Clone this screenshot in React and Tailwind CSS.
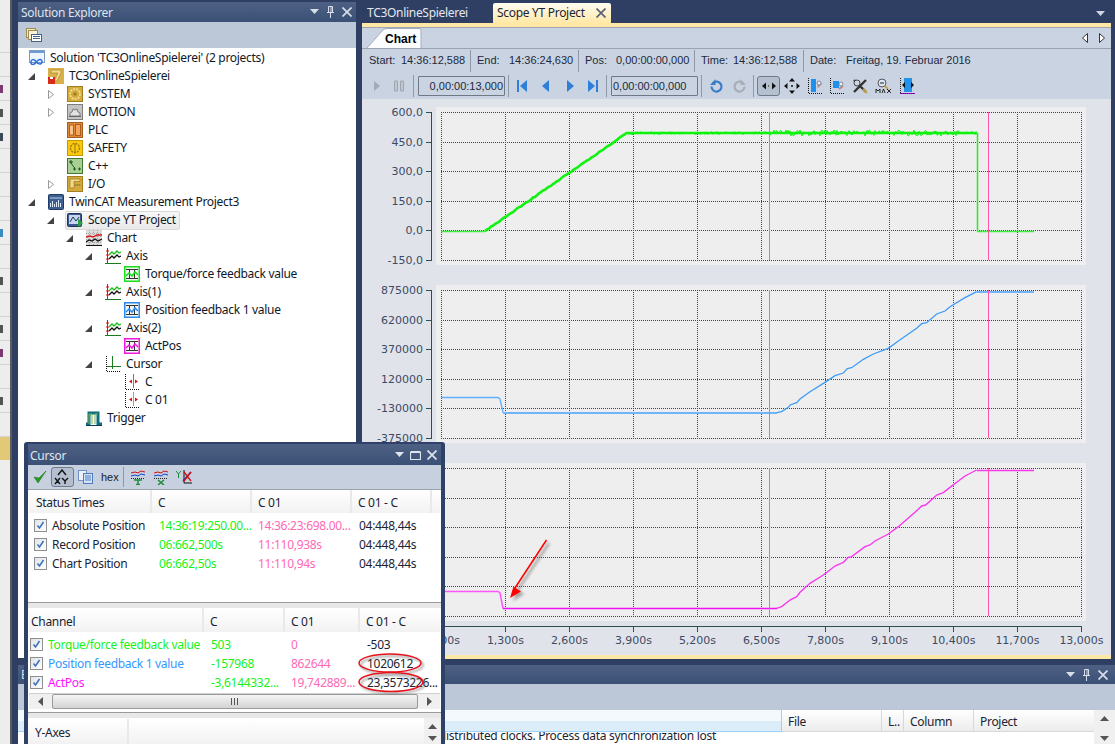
import React from "react";

const UI = "font-['Noto_Sans',sans-serif] tracking-[-0.3px]";
const TAH = "font-['Liberation_Sans',sans-serif] tracking-normal";

function Tri({ className = "" }) {
  return <svg width="9" height="6" viewBox="0 0 9 6" className={className}><path d="M0 0h9L4.500 5z" fill="currentColor" /></svg>;
}
function Pin() {
  return <svg width="9" height="12" viewBox="0 0 9 12"><path d="M2.500 .5h4v6h-4zM1 6.500h7M4.500 7v5M5 1v5" stroke="currentColor" fill="none" /></svg>;
}
function Cross() {
  return <svg width="10" height="10" viewBox="0 0 10 10"><path d="M.5.5l9 9M9.500.5l-9 9" stroke="currentColor" strokeWidth="1.700" /></svg>;
}
function Maxi() {
  return <svg width="11" height="10" viewBox="0 0 11 10"><path d="M.5 2.500h10v7H.5z M.5 1.500h10" stroke="currentColor" fill="none" strokeWidth="1.200" /></svg>;
}

/* --- tree icons --- */
function Box({ fill, stroke, children }) {
  return (
    <svg width="16" height="16" viewBox="0 0 16 16" className="shrink-0">
      <rect x=".5" y=".5" width="15" height="15" fill={fill} stroke={stroke} />
      {children}
    </svg>
  );
}
const IconSolution = () => (
  <svg width="16" height="16" viewBox="0 0 16 16" className="shrink-0">
    <rect x=".5" y=".5" width="15" height="12" fill="#eef4fb" stroke="#7c9cc8" />
    <rect x="1" y="1" width="14" height="2" fill="#6f9ad6" />
    <path d="M2 12c0-3 3-3 4.500-1s3 3.500 5 3 2-4 0-4.500S8 11 6.500 13 1.500 15 2 12z" fill="none" stroke="#2d6fe0" strokeWidth="1.500" />
  </svg>
);
const IconProject = () => (
  <svg width="16" height="16" viewBox="0 0 16 16" className="shrink-0">
    <rect width="16" height="16" fill="#d8b049" />
    <path d="M3 2h10v3l-4 8H6l4-8H3z" fill="#f0d88a" stroke="#a8802a" strokeWidth=".6" />
    <rect y="9" width="7" height="7" fill="#d92a1c" />
    <rect x="2" y="9" width="3" height="2" fill="#fff" />
  </svg>
);
const IconSystem = () => (
  <Box fill="#d5ab3c" stroke="#a27f22">
    <circle cx="8" cy="8" r="5" fill="none" stroke="#f0d88a" strokeWidth="2" strokeDasharray="2 1" />
    <circle cx="8" cy="8" r="1.800" fill="#a27f22" />
  </Box>
);
const IconMotion = () => (
  <Box fill="#c4c4c4" stroke="#7d7d7d">
    <path d="M3 12V9l2-1 1-3 2 1 2-1 1 3 2 1v3z" fill="#e2e2e2" stroke="#666" strokeWidth=".8" />
    <path d="M2 12.500h12" stroke="#666" />
  </Box>
);
const IconPlc = () => (
  <Box fill="#e0883a" stroke="#a85e1c">
    <rect x="2.500" y="3" width="4" height="10" fill="#f5c38c" stroke="#9c5215" strokeWidth=".8" />
    <rect x="8.500" y="2.500" width="5" height="11" fill="#f1a45d" stroke="#9c5215" strokeWidth=".8" />
  </Box>
);
const IconSafety = () => (
  <Box fill="#fbc90d" stroke="#c49a00">
    <circle cx="8" cy="8" r="4.500" fill="none" stroke="#9a7b10" strokeWidth="1.400" strokeDasharray="2 1" />
    <path d="M8 4v8" stroke="#9a7b10" />
  </Box>
);
const IconCpp = () => (
  <Box fill="#a9cf95" stroke="#3f7a2c">
    <path d="M3 3c2 3 3 6 5 7" stroke="#1e5c1e" fill="none" />
    <path d="M6 11h3M7.500 9.500v3M11 11h3M12.500 9.500v3M3 3h2v2H3z" stroke="#1e5c1e" fill="none" />
  </Box>
);
const IconIO = () => (
  <Box fill="#d5a93a" stroke="#a27f22">
    <path d="M3 3h10v2.500H7v3h6v1H7v2.500H3z" fill="#f0d88a" stroke="#8f6d18" strokeWidth=".6" />
  </Box>
);
const IconMeas = () => (
  <svg width="16" height="16" viewBox="0 0 16 16" className="shrink-0">
    <rect x=".5" y=".5" width="15" height="15" rx="1" fill="#3d5f90" stroke="#1f3a66" />
    <path d="M2 4h12" stroke="#bcd2ee" />
    <path d="M2.500 13V9M4.500 13V7M6.500 13v-3M8.500 13V8M10.500 13V6M12.500 13V9" stroke="#dfe9f7" />
  </svg>
);
const IconScope = () => (
  <svg width="16" height="16" viewBox="0 0 16 16" className="shrink-0">
    <rect x=".5" y="1.500" width="14" height="13" rx="1" fill="#3c5a8e" stroke="#1d3560" />
    <rect x="2" y="3" width="11" height="9" fill="#c6d6ec" />
    <path d="M3 10l3-5 3 4 3-4" stroke="#1d3560" fill="none" />
    <path d="M11 6.500l5 4.500-5 4.500z" fill="#2e9e46" />
  </svg>
);
const IconChart = () => (
  <svg width="16" height="16" viewBox="0 0 16 16" className="shrink-0">
    <rect width="16" height="16" fill="#dcdcdc" />
    <path d="M0 3.500h16M0 6.500h16M0 9.500h16M0 12.500h16M3.500 0v16M7.500 0v16M11.500 0v16" stroke="#aaa" strokeDasharray="1 1" />
    <path d="M0 7l4-1 3 1 4-2 5 0" stroke="#e01010" fill="none" strokeWidth="1.300" />
    <path d="M0 12l3-2 3 1 3-2 3 2 4-2" stroke="#111" fill="none" strokeWidth="1.300" />
    <path d="M0 15.500h16" stroke="#111" />
  </svg>
);
const IconAxis = () => (
  <svg width="16" height="16" viewBox="0 0 16 16" className="shrink-0">
    <path d="M2.500 0v15" stroke="#e01010" />
    <path d="M1 3h3M1 7h3M1 11h3" stroke="#e01010" />
    <path d="M0 15.500h16" stroke="#1b7a1b" />
    <path d="M4 7l3-3 2 2 3-3 2 2 2-1" stroke="#18c018" fill="none" strokeWidth="1.300" />
    <path d="M4 11l3-3 2 2 3-3 2 2 2-1" stroke="#111" fill="none" strokeWidth="1.300" />
  </svg>
);
const IconChan = ({ color }) => (
  <svg width="16" height="16" viewBox="0 0 16 16" className="shrink-0">
    <rect x=".75" y=".75" width="14.500" height="14.500" fill="#f4f4f4" stroke={color} strokeWidth="1.500" />
    <path d="M2 3.500h12M2 12.500h12M5.500 3v10M10.500 3v10" stroke="#333" />
    <path d="M2 10l3-3 3 3 3-4 3 3" stroke={color} fill="none" strokeWidth="1.500" />
  </svg>
);
const IconCursorT = () => (
  <svg width="16" height="16" viewBox="0 0 16 16" className="shrink-0">
    <path d="M1.500 0v15.500H16" stroke="#111" fill="none" strokeDasharray="1 1" />
    <path d="M7.500 0v13M2 10.500h14" stroke="#1d7a1d" fill="none" />
  </svg>
);
const IconC = ({ color }) => (
  <svg width="16" height="16" viewBox="0 0 16 16" className="shrink-0">
    <path d="M1.500 0v15.500H16" stroke="#111" fill="none" strokeDasharray="1 1" />
    <path d="M9.500 0v14" stroke={color} fill="none" />
    <path d="M5 7.500l3-2v4zM14 7.500l-3-2v4z" fill="#e01010" />
  </svg>
);
const IconTrigger = () => (
  <svg width="16" height="16" viewBox="0 0 16 16" className="shrink-0">
    <path d="M0 14h3V3h9v11h4" stroke="#0c6f7e" strokeWidth="3" fill="none" />
    <path d="M3 14V4h3v10M9 14V4h3" stroke="#7fb552" strokeWidth="1" fill="none" />
    <path d="M0 15.500h16" stroke="#0a3c5e" />
  </svg>
);

const indent = {
  0: "pl-[11px]",
  1: "pl-[11px]",
  2: "pl-[30px]",
  3: "pl-[49px]",
  4: "pl-[68px]",
  5: "pl-[87px]",
};

const tree = [
  { l: 0, t: "Solution 'TC3OnlineSpielerei' (2 projects)", i: <IconSolution />, a: "none0" },
  { l: 1, t: "TC3OnlineSpielerei", i: <IconProject />, a: "open" },
  { l: 2, t: "SYSTEM", i: <IconSystem />, a: "closed" },
  { l: 2, t: "MOTION", i: <IconMotion />, a: "closed" },
  { l: 2, t: "PLC", i: <IconPlc />, a: "none" },
  { l: 2, t: "SAFETY", i: <IconSafety />, a: "none" },
  { l: 2, t: "C++", i: <IconCpp />, a: "none" },
  { l: 2, t: "I/O", i: <IconIO />, a: "closed" },
  { l: 1, t: "TwinCAT Measurement Project3", i: <IconMeas />, a: "open" },
  { l: 2, t: "Scope YT Project", i: <IconScope />, a: "open", sel: true },
  { l: 3, t: "Chart", i: <IconChart />, a: "open" },
  { l: 4, t: "Axis", i: <IconAxis />, a: "open" },
  { l: 5, t: "Torque/force feedback value", i: <IconChan color="#18e018" />, a: "none" },
  { l: 4, t: "Axis(1)", i: <IconAxis />, a: "open" },
  { l: 5, t: "Position feedback 1 value", i: <IconChan color="#2a8cf0" />, a: "none" },
  { l: 4, t: "Axis(2)", i: <IconAxis />, a: "open" },
  { l: 5, t: "ActPos", i: <IconChan color="#f018e0" />, a: "none" },
  { l: 4, t: "Cursor", i: <IconCursorT />, a: "open" },
  { l: 5, t: "C", i: <IconC color="#18c018" />, a: "none" },
  { l: 5, t: "C 01", i: <IconC color="#f070a8" />, a: "none" },
  { l: 3, t: "Trigger", i: <IconTrigger />, a: "none" },
];

function TreeArrow({ a }) {
  if (a === "none0") return null;
  return (
    <span className="w-[19px] shrink-0 flex items-center">
      {a === "open" && <svg width="7" height="7" viewBox="0 0 7 7" className="-ml-[1px]"><path d="M0 7L7 0v7z" fill="#444" /></svg>}
      {a === "closed" && <svg width="6" height="9" viewBox="0 0 6 9"><path d="M.5.5l5 4-5 4z" fill="#fff" stroke="#999" /></svg>}
    </span>
  );
}

function SolutionExplorer() {
  return (
    <div className="w-[338px] h-[656px] mt-[2px] flex flex-col shrink-0">
      <div className="h-[20px] bg-gradient-to-b from-[#4e6184] to-[#3b5076] flex items-center pl-[3px] text-[#dfe5ef]">
        <span className="text-[12px] flex-1 pt-[1px]">Solution Explorer</span>
        <span className="flex items-center gap-[7px] pr-[4px] text-[#d8dfea]">
          <Tri />
          <Pin />
          <Cross />
        </span>
      </div>
      <div className="h-[26px] bg-[#bcc7d8] flex items-center pl-[8px]">
        <svg width="16" height="16" viewBox="0 0 16 16">
          <rect x=".5" y="1.500" width="9" height="9" fill="#f5e7b8" stroke="#a08c50" />
          <rect x="2.500" y="3.500" width="9" height="9" fill="#fbf3d8" stroke="#a08c50" />
          <rect x="5.500" y="7.500" width="10" height="7" fill="#fff" stroke="#44618c" />
          <path d="M7 9.500h7M7 11.500h7" stroke="#44618c" />
        </svg>
      </div>
      <div className="flex-1 bg-white pt-[1px] text-[12px] text-[#101828] leading-[18px]">
        {tree.map((r, i) => (
          <div key={i} className={`h-[18px] flex items-center ${indent[r.l]}`}>
            <TreeArrow a={r.a} />
            {r.sel ? (
              <span className="flex items-center gap-[5px] -ml-[2px] pl-[1px] pr-[3px] h-[19px] border border-[#d9d9d9] rounded-[2px] bg-gradient-to-b from-[#f7f7f7] to-[#e9e9e9] whitespace-nowrap">
                {r.i}
                <span>{r.t}</span>
              </span>
            ) : (
              <span className="flex items-center gap-[5px] whitespace-nowrap">
                {r.i}
                <span>{r.t}</span>
              </span>
            )}
          </div>
        ))}
      </div>
    </div>
  );
}

/* ---- chart traces ---- */
function noise(i) {
  const v = Math.sin(i * 12.9898) * 43758.5453;
  return v - Math.floor(v) - 0.5;
}
function ptsToStr(pts) {
  return pts.map((p) => p[0] + "," + p[1]).join(" ");
}
function green() {
  const a = [];
  for (let x = 485; x <= 627; x += 2) a.push([x, 231 - ((x - 485) * 98) / 142 + noise(x) * 1]);
  return a;
}
function greenFlat() {
  const a = [];
  for (let x = 627; x <= 977; x += 1) {
    const amp = x < 770 ? 3 : x < 960 ? 6 : 3;
    a.push([x, 133 + noise(x) * amp]);
  }
  return a;
}
const ramp2 = [[50,413],[65,410],[85,397],[90,390],[110,383],[120,372],[150,350],[195,322],[225,302],[250,294],[262,281],[275,278],[310,253],[340,237],[385,220],[415,198],[470,160],[485,146],[500,143],[530,117],[555,108],[570,95],[615,68],[650,50]].map(
  (p) => [760 + p[0] / 3, 275 + p[1] / 3]
);
const ramp3 = [[50,460],[65,455],[90,435],[110,425],[120,412],[150,385],[190,360],[225,333],[250,322],[265,307],[275,305],[315,275],[330,270],[345,258],[385,237],[415,215],[465,172],[485,153],[497,150],[530,120],[550,113],[570,97],[615,63],[650,45]].map(
  (p) => [760 + p[0] / 3, 455 + p[1] / 3]
);

const gx = [441, 505, 569, 633, 697, 761, 825, 889, 953, 1017, 1081];

function Chart({ top, h, y0, labels, bgTop, children, xAxis }) {
  const ys = [0, 1, 2, 3, 4, 5].map((k) => y0 + [0, 30, 59, 89, 118, 148][k]);
  return (
    <svg width="749" height={h} viewBox={`362 ${top} 749 ${h}`} className="block tracking-normal">
      <rect x="436" y={bgTop} width="650" height="158" fill="#eeeeee" />
      <g stroke="#2f4f4f" strokeDasharray="1 1" shapeRendering="crispEdges">
        {ys.map((y) => <line key={y} x1="441" x2="1082" y1={y + 0.5} y2={y + 0.5} />)}
        {gx.map((x) => <line key={x} x1={x + 0.5} x2={x + 0.5} y1={y0} y2={y0 + 148} />)}
      </g>
      <g stroke="#2f4f4f" shapeRendering="crispEdges">
        <line x1="431.5" x2="431.5" y1={y0} y2={y0 + 149} />
        {ys.map((y) => <line key={y} x1="426" x2="432" y1={y + 0.5} y2={y + 0.5} />)}
      </g>
      <g fontFamily="'DejaVu Sans',sans-serif" fontSize="11" fill="#3d4a66" textAnchor="end">
        {labels.map((t, k) => (
          <text key={k} x="423" y={ys[k] + 4}>{t}</text>
        ))}
      </g>
      {children}
      <line x1="769.5" x2="769.5" y1={y0} y2={y0 + 148} stroke="#22ee22" shapeRendering="crispEdges" />
      <line x1="988.5" x2="988.5" y1={y0} y2={y0 + 148} stroke="#ff55aa" shapeRendering="crispEdges" />
      {xAxis}
    </svg>
  );
}

const xl = ["0,000s", "1,300s", "2,600s", "3,900s", "5,200s", "6,500s", "7,800s", "9,100s", "10,400s", "11,700s", "13,000s"];

function Charts() {
  return (
    <div className="h-[556px] bg-[#e0e4ea] flex flex-col">
      <Chart top={99} h={178} y0={112} bgTop={107} labels={["600,0", "450,0", "300,0", "150,0", "0,0", "-150,0"]}>
        <polyline points={ptsToStr(green())} fill="none" stroke="#10f210" strokeWidth="2.600" />
        <polyline points="441,231.500 485,231.500" fill="none" stroke="#3ef03e" strokeWidth="1.600" />
        <polyline points="627,133 977,133" fill="none" stroke="#10f210" strokeWidth="2.500" />
        <polyline points={ptsToStr(greenFlat())} fill="none" stroke="#0cf50c" strokeWidth="1" />
        <polyline points="977.5,133 977.5,231.5" fill="none" stroke="#22ee22" strokeWidth="1.500" />
        <polyline points="977,231.500 1034,231.500" fill="none" stroke="#3ef03e" strokeWidth="1.600" />
      </Chart>
      <Chart top={277} h={178} y0={290} bgTop={285} labels={["875000", "620000", "370000", "120000", "-130000", "-375000"]}>
        <polyline
          points={ptsToStr([[441, 397.5], [498, 397.5], [500, 399], [503, 412.5]])}
          fill="none"
          stroke="#62aeff"
          strokeWidth="1.300"
        />
        <polyline points="503,412.5 777,412.5" fill="none" stroke="#72b4fa" strokeWidth="2" shapeRendering="crispEdges" />
        <polyline points={ptsToStr(ramp2)} fill="none" stroke="#3d9cf8" strokeWidth="1.300" />
        <polyline points="977,291.500 1034,291.500" fill="none" stroke="#72b4fa" strokeWidth="2" shapeRendering="crispEdges" />
      </Chart>
      <Chart
        top={455}
        h={200}
        y0={468}
        bgTop={463}
        labels={[]}
        xAxis={
          <g>
            <g stroke="#2f4f4f" shapeRendering="crispEdges">
              <line x1="431" x2="1082" y1="626.5" y2="626.5" />
              {gx.map((x) => <line key={x} x1={x + 0.5} x2={x + 0.5} y1="626" y2="632" />)}
            </g>
            <g fontFamily="'DejaVu Sans',sans-serif" fontSize="11" fill="#3d4a66" textAnchor="middle">
              {gx.map((x, k) => <text key={x} x={x + 0.5} y="644">{xl[k]}</text>)}
            </g>
          </g>
        }
      >
        <polyline points={ptsToStr([[441, 591.5], [498, 591.5], [500, 593], [503, 608.5]])} fill="none" stroke="#ff55ff" strokeWidth="1.500" />
        <polyline points="503,608.500 777,608.500" fill="none" stroke="#f010f0" strokeWidth="1.400" />
        <polyline points={ptsToStr(ramp3)} fill="none" stroke="#f838f0" strokeWidth="1.400" />
        <polyline points="977,470.500 1034,470.500" fill="none" stroke="#f838f0" strokeWidth="1.400" />
        <defs>
          <filter id="blur1" x="-30%" y="-30%" width="160%" height="160%">
            <feGaussianBlur stdDeviation="1.500" />
          </filter>
        </defs>
        <g filter="url(#blur1)" opacity=".55">
          <path d="M549 543L515 594" stroke="#666" strokeWidth="2.500" />
          <path d="M513 601l4-12 7 5z" fill="#666" />
        </g>
        <path d="M546.500 540L513 591" stroke="#ff0000" strokeWidth="1.500" />
        <path d="M510 598l3.500-11.500 7.500 5z" fill="#ff0000" />
      </Chart>
    </div>
  );
}

/* ---- document ---- */
function Sep({ className = "" }) {
  return <span className={`w-[1px] h-[22px] bg-[#8f98a6] shrink-0 ${className}`} />;
}
function Seg({ w, label, lw, value }) {
  return (
    <div className={`flex items-center h-full pl-[6px] whitespace-nowrap ${w}`}>
      <span className={lw}>{label}</span>
      <span>{value}</span>
    </div>
  );
}
function TB({ w = "w-[23px]", children, className = "" }) {
  return <span className={`${w} h-[22px] shrink-0 flex items-center justify-center ${className}`}>{children}</span>;
}
function TimeBox({ children, className = "" }) {
  return (
    <span className={`w-[87px] h-[20px] shrink-0 border border-[#6f7885] rounded-[1px] flex items-center text-[11px] text-[#1c2a3c] whitespace-nowrap ${className}`}>
      {children}
    </span>
  );
}

function ToolbarIcons() {
  const B = "#2f7fd8";
  return (
    <div className="h-[27px] pt-[1px] flex items-center pl-[4px]">
      <TB w="w-[22px]"><svg width="8" height="12" viewBox="0 0 8 12"><path d="M1 1l6 5-6 5z" fill="#a3abb6" /></svg></TB>
      <TB w="w-[22px]"><svg width="12" height="12" viewBox="0 0 12 12"><path d="M1.500 1h3v10h-3zM7.500 1h3v10h-3z" fill="#c0c6cf" stroke="#a0a7b1" /></svg></TB>
      <Sep className="ml-[3px]" />
      <TimeBox className="ml-[4px] justify-end pr-[1px]">0,00:00:13,000</TimeBox>
      <Sep className="ml-[3px]" />
      <span className="ml-[1px]" />
      <TB w="w-[24px]"><svg width="12" height="12" viewBox="0 0 12 12"><path d="M1 0h2v12H1zM11 0v12L4 6z" fill={B} /></svg></TB>
      <TB w="w-[24px]"><svg width="8" height="12" viewBox="0 0 8 12"><path d="M7 0v12L0 6z" fill={B} /></svg></TB>
      <TB><svg width="8" height="12" viewBox="0 0 8 12"><path d="M1 0v12l7-6z" fill={B} /></svg></TB>
      <TB><svg width="12" height="12" viewBox="0 0 12 12"><path d="M1 0v12l7-6zM9 0h2v12H9z" fill={B} /></svg></TB>
      <Sep className="ml-[2px]" />
      <TimeBox className="ml-[4px] pl-[1px]">0,00:00:00,000</TimeBox>
      <Sep className="ml-[3px]" />
      <span className="ml-[3px]" />
      <TB><svg width="15" height="15" viewBox="0 0 15 15"><path d="M4 4a5 5 0 1 1-1.500 3.500" fill="none" stroke="#3b7ec8" strokeWidth="2.200" /><path d="M6.500 0v6H1z" fill="#3b7ec8" /></svg></TB>
      <TB><svg width="15" height="15" viewBox="0 0 15 15"><path d="M11 4a5 5 0 1 0 1.500 3.500" fill="none" stroke="#a9aeb6" strokeWidth="2.200" /><path d="M8.500 0v6H14z" fill="#a9aeb6" /></svg></TB>
      <Sep className="ml-[2px]" />
      <span className="ml-[3px] w-[23px] h-[20px] shrink-0 border border-[#707a89] rounded-[3px] bg-[#b4bfd0] flex items-center justify-center">
        <svg width="14" height="8" viewBox="0 0 14 8"><path d="M0 4l4-3.500v7zM14 4l-4-3.500v7z" fill="#111" /><path d="M6 4h2" stroke="#111" strokeDasharray="1 1" /></svg>
      </span>
      <TB><svg width="16" height="16" viewBox="0 0 16 16"><path d="M8 0l3 3.500H5zM8 16l3-3.500H5zM0 8l3.500-3v6zM16 8l-3.500-3v6z" fill="#111" /><circle cx="8" cy="8" r="1" fill="#111" /></svg></TB>
      <TB><svg width="16" height="16" viewBox="0 0 16 16"><path d="M1.500 0v15.500H16" stroke="#111" strokeDasharray="1 1" fill="none" /><rect x="4" y="1" width="5" height="13" fill="#1e90ee" /><path d="M10 8l4-3 1 1-4 4z" fill="#b88" /><circle cx="12" cy="5" r="2" fill="#e8eef8" stroke="#889" /></svg></TB>
      <TB w="w-[22px]"><svg width="16" height="16" viewBox="0 0 16 16"><path d="M1.500 0v15.500H16" stroke="#111" strokeDasharray="1 1" fill="none" /><rect x="4" y="3" width="6" height="7" fill="#1e90ee" /><path d="M10 11l4-3" stroke="#b88" strokeWidth="2" /><circle cx="12" cy="6" r="2" fill="#e8eef8" stroke="#889" /></svg></TB>
      <TB w="w-[24px]"><svg width="16" height="16" viewBox="0 0 16 16"><path d="M2 2l12 12M14 2L2 14" stroke="#333" strokeWidth="2.400" /><circle cx="5" cy="5" r="3" fill="#cfd8e6" stroke="#444" /><path d="M11 11l4 4" stroke="#c9a33e" strokeWidth="2" /></svg></TB>
      <TB><svg width="17" height="16" viewBox="0 0 17 16"><circle cx="7" cy="5" r="4" fill="#dbe6f4" stroke="#555" /><path d="M5 5h4" stroke="#222" /><path d="M10 8l3 3" stroke="#c9a33e" strokeWidth="2" /><path d="M1 15v-4l2 2 2-2v4M7 15l1.500-4 1.500 4M12 11l4 4M16 11l-4 4" stroke="#111" fill="none" strokeWidth=".9" /></svg></TB>
      <TB><svg width="16" height="16" viewBox="0 0 16 16"><path d="M1.500 0v15.500H16" stroke="#222" strokeDasharray="1 1" fill="none" /><path d="M1 15.500h15" stroke="#a010c0" strokeDasharray="1 1" /><rect x="5" y="0" width="8" height="14" fill="#2592ea" /><path d="M3 7l3-3v6zM15 7l-3-3v6z" fill="#111" /></svg></TB>
    </div>
  );
}

function DocPanel() {
  return (
    <div className="w-[749px] ml-[6px] shrink-0 flex flex-col h-[659px]">
      <div className="h-[23px] flex items-end relative">
        <span className="w-[131px] h-[20px] pl-[5px] text-[12px] text-[#e3e8f0] flex items-center">TC3OnlineSpielerei</span>
        <span className="w-[118px] h-[20px] pl-[4px] pr-[4px] rounded-t-[2px] bg-gradient-to-b from-[#fffcf2] to-[#ffe8a6] text-[12px] text-[#1b2537] flex items-center justify-between whitespace-nowrap">
          Scope YT Project
          <span className="text-[#5a6472] mr-[1px]"><Cross /></span>
        </span>
        <span className="ml-auto mb-[6px] mr-[6px] text-[#ced6e2]"><Tri /></span>
      </div>
      <div className="h-[4px] bg-[#ffe8a6]" />
      <div className="bg-[#c9d3e2] flex flex-col border-t border-[#9ea6b4]">
        <div className="h-[21px] flex items-end pl-[8px] border-b border-[#9aa2ae] relative">
          <svg width="56" height="20" viewBox="0 0 56 20" className="absolute left-[5px] top-[0px]">
            <path d="M0 20L15 3Q17 .5 20 .5H52q2 0 2 2V20" fill="#fbfcfe" stroke="#a4adba" />
          </svg>
          <span className={`relative ml-[15px] text-[12px] font-bold text-black ${TAH}`}>Chart</span>
          <span className="ml-auto mr-[6px] mb-[5px] flex gap-[11px]">
            <svg width="6" height="10" viewBox="0 0 6 10"><path d="M5.500.5l-5 4.500 5 4.500z" fill="#fff" stroke="#333" /></svg>
            <svg width="6" height="10" viewBox="0 0 6 10"><path d="M.5.5l5 4.500-5 4.500z" fill="#fff" stroke="#333" /></svg>
          </span>
        </div>
        <div className={`h-[23px] flex items-center text-[11px] text-[#1c2a3c] ${TAH}`}>
          <Seg w="w-[108px] pl-[7px]" lw="w-[32px]" label="Start:" value="14:36:12,588" />
          <Sep />
          <Seg w="w-[107px]" lw="w-[32px]" label="End:" value="14:36:24,630" />
          <Sep />
          <Seg w="w-[115px]" lw="w-[31px]" label="Pos:" value="0,00:00:00,000" />
          <Sep />
          <Seg w="w-[108px]" lw="w-[32px]" label="Time:" value="14:36:12,588" />
          <Sep />
          <Seg w="w-[200px]" lw="w-[36px]" label="Date:" value="Freitag, 19. Februar 2016" />
        </div>
        <div className={TAH}>
          <ToolbarIcons />
        </div>
      </div>
      <Charts />
      <div className="h-[4px] bg-[#ffe8a6]" />
    </div>
  );
}

/* ---- bottom panel ---- */
function BottomPanel() {
  return (
    <div className="h-[79px] mt-[6px] flex flex-col">
      <div className="h-[19px] bg-gradient-to-b from-[#4e6184] to-[#3b5076] flex items-center pl-[3px] text-[#d8dfea]">
        <span className="text-[12px] flex-1">E</span>
        <span className="flex items-center gap-[7px] pr-[7px]">
          <Tri />
          <Pin />
          <Cross />
        </span>
      </div>
      <div className="h-[26px] bg-[#bcc7d8]" />
      <div className="h-[22px] flex text-[12px] text-[#1a2434]">
        <div className="w-[764px] border-r border-b border-[#a0d0f4] bg-gradient-to-b from-[#f3f9fc] from-50% to-[#daedf8] to-50%" />
        <div className="w-[100px] pl-[6px] pt-[2px] flex items-center border-r border-b border-[#d8d8d8] bg-gradient-to-b from-white to-[#ececec]">File</div>
        <div className="w-[22px] pl-[6px] pt-[2px] flex items-center border-r border-b border-[#d8d8d8] bg-gradient-to-b from-white to-[#ececec]">L..</div>
        <div className="w-[70px] pl-[6px] pt-[2px] flex items-center border-r border-b border-[#d8d8d8] bg-gradient-to-b from-white to-[#ececec]">Column</div>
        <div className="w-[120px] pl-[6px] pt-[2px] flex items-center border-b border-[#d8d8d8] bg-gradient-to-b from-white to-[#ececec]">Project</div>
        <div className="flex-1 bg-[#f0f0f0] flex justify-center pt-[6px]">
          <svg width="9" height="5" viewBox="0 0 9 5"><path d="M4.500 0l4.500 5H0z" fill="#555" /></svg>
        </div>
      </div>
      <div className="h-[12px] flex bg-white text-[12px] text-[#1a2434] overflow-hidden">
        <div className="w-[698px] text-right whitespace-nowrap leading-[14px] -mt-[3px]">distributed clocks. Process data synchronization lost</div>
        <div className="flex-1" />
        <div className="w-[21px] bg-[#f0f0f0] flex justify-center pt-[4px]">
          <svg width="9" height="5" viewBox="0 0 9 5"><path d="M0 0h9L4.500 5z" fill="#555" /></svg>
        </div>
      </div>
    </div>
  );
}

/* ---- cursor window ---- */
function Check() {
  return (
    <span className="w-[13px] h-[13px] shrink-0 border border-[#8f8f8f] bg-gradient-to-br from-[#dfe4ea] to-white flex items-center justify-center">
      <svg width="9" height="9" viewBox="0 0 9 9"><path d="M1.500 4.500l2 2.500 4-6" fill="none" stroke="#3b6fb8" strokeWidth="1.500" /></svg>
    </span>
  );
}

function HeadCell({ w, children }) {
  return (
    <div className={`h-full shrink-0 flex items-center pt-[3px] border-r-2 border-[#e9e9e9] bg-gradient-to-b from-white to-[#f2f2f2] ${w}`}>
      {children}
    </div>
  );
}

const C_GREEN = "text-[#18f018]";
const C_PINK = "text-[#ff69b4]";

function StatusRow({ label, a, b, c }) {
  return (
    <div className="h-[19px] flex items-center whitespace-nowrap">
      <span className="w-[131px] shrink-0 flex items-center gap-[5px] pl-[6px]"><Check />{label}</span>
      <span className={`w-[99px] shrink-0 ${C_GREEN}`}>{a}</span>
      <span className={`w-[101px] shrink-0 ${C_PINK}`}>{b}</span>
      <span>{c}</span>
    </div>
  );
}
function ChanRow({ label, color, a, b, c }) {
  return (
    <div className="h-[19px] flex items-center whitespace-nowrap">
      <span className={`w-[183px] shrink-0 flex items-center gap-[5px] pl-[2px] ${color}`}><Check />{label}</span>
      <span className={`w-[80px] shrink-0 ${C_GREEN}`}>{a}</span>
      <span className={`w-[76px] shrink-0 ${C_PINK}`}>{b}</span>
      <span>{c}</span>
    </div>
  );
}

function CursorWindow() {
  return (
    <div className="absolute left-[24px] top-[442px] w-[421px] h-[302px] bg-[#2f4168] rounded-t-[3px] p-[4px] pt-[2px] pb-0 flex flex-col text-[12px] text-[#1a2434]">
      <div className="h-[21px] shrink-0 bg-gradient-to-b from-[#4e6184] to-[#3b5076] flex items-center pl-[2px] text-[#dfe5ef]">
        <span className="text-[12px] flex-1 pt-[2px]">Cursor</span>
        <span className="flex items-center gap-[6px] pr-[4px]">
          <Tri />
          <Maxi />
          <Cross />
        </span>
      </div>
      <div className="h-[25px] shrink-0 bg-[#c6d0df] flex items-center border-b border-[#9aa2ae]">
        <span className="w-[21px] flex justify-center ml-[1px]">
          <svg width="14" height="14" viewBox="0 0 14 14"><path d="M1 7l4 6 8-12-7 7z" fill="#2a9a22" stroke="#1c7a18" strokeWidth=".6" /></svg>
        </span>
        <span className="ml-[1px] w-[23px] h-[20px] border border-[#707a89] rounded-[3px] bg-[#b4bfd0] flex items-center justify-center">
          <svg width="17" height="16" viewBox="0 0 17 16">
            <path d="M4 6l4-5 4 5" fill="none" stroke="#111" strokeWidth="1.400" />
            <path d="M1 9l5 6M6 9l-5 6M8 9l3 3 3-3M11 12v3" fill="none" stroke="#111" strokeWidth="1.400" />
          </svg>
        </span>
        <span className="ml-[3px] w-[16px] flex justify-center">
          <svg width="15" height="14" viewBox="0 0 15 14"><rect x=".5" y=".5" width="8" height="10" fill="#eaf1fb" stroke="#6f93c8" /><rect x="5.500" y="3.500" width="9" height="10" fill="#d3e2f6" stroke="#4f7cc0" /><path d="M7 6h6M7 8h6M7 10h6" stroke="#4f7cc0" /></svg>
        </span>
        <span className={`ml-[8px] w-[20px] text-[11px] text-[#222] ${TAH}`}>hex</span>
        <span className="w-[1px] h-[20px] bg-[#8f98a6] ml-[2px]" />
        <span className="ml-[7px] w-[14px] flex justify-center">
          <svg width="14" height="16" viewBox="0 0 14 16"><path d="M0 4l4-1 3 1 3-2 4 1" stroke="#d01010" fill="none" /><path d="M0 7l4-1 3 1 3-2 4 1" stroke="#1040d0" fill="none" /><path d="M0 9.500h14" stroke="#222" strokeDasharray="1 1" /><path d="M3 11h8M7 11v5M5 15.500h4" stroke="#1d8a3a" strokeWidth="1.500" /></svg>
        </span>
        <span className="ml-[9px] w-[14px] flex justify-center">
          <svg width="14" height="16" viewBox="0 0 14 16"><path d="M0 4l4-1 3 1 3-2 4 1" stroke="#d01010" fill="none" /><path d="M0 7l4-1 3 1 3-2 4 1" stroke="#1040d0" fill="none" /><path d="M0 9.500h14" stroke="#222" strokeDasharray="1 1" /><path d="M4 11l6 5M10 11l-6 5" stroke="#1d8a3a" strokeWidth="1.500" /></svg>
        </span>
        <span className="ml-[8px] w-[16px] flex justify-center">
          <svg width="16" height="14" viewBox="0 0 16 14"><path d="M0 1l2.500 3 2.500-3M2.500 4v4" stroke="#1d8a3a" fill="none" /><path d="M8 0v13h8" stroke="#111" fill="none" /><path d="M7 11l8-9" stroke="#1040d0" strokeWidth="1.500" /><path d="M8 2l7 9M15 2L8 11" stroke="#d01010" strokeWidth="1.300" /></svg>
        </span>
      </div>

      <div className="h-[113px] shrink-0 bg-white border-b border-[#9a9a9a] flex flex-col">
        <div className="h-[23px] shrink-0 flex items-center mx-[1px]">
          <HeadCell w="w-[123px] pl-[7px]">Status Times</HeadCell>
          <HeadCell w="w-[100px] pl-[6px]">C</HeadCell>
          <HeadCell w="w-[100px] pl-[6px]">C 01</HeadCell>
          <HeadCell w="w-[80px] pl-[6px]">C 01 - C</HeadCell>
          <div className="flex-1 h-full bg-gradient-to-b from-white to-[#f2f2f2]" />
        </div>
        <div className="h-[3px]" />
        <StatusRow label="Absolute Position" a="14:36:19:250.00..." b="14:36:23:698.00..." c="04:448,44s" />
        <StatusRow label="Record Position" a="06:662,500s" b="11:110,938s" c="04:448,44s" />
        <StatusRow label="Chart Position" a="06:662,50s" b="11:110,94s" c="04:448,44s" />
      </div>
      <div className="h-[5px] shrink-0 bg-[#e8e8e8]" />

      <div className="h-[105px] shrink-0 bg-white border-b border-[#9a9a9a] flex flex-col">
        <div className="h-[24px] shrink-0 flex items-center mx-[1px]">
          <HeadCell w="w-[175px] pl-[2px]">Channel</HeadCell>
          <HeadCell w="w-[81px] pl-[6px]">C</HeadCell>
          <HeadCell w="w-[75px] pl-[6px]">C 01</HeadCell>
          <div className="flex-1 h-full flex items-center pt-[3px] pl-[6px] bg-gradient-to-b from-white to-[#f2f2f2]">C 01 - C</div>
        </div>
        <div className="h-[3px]" />
        <ChanRow label="Torque/force feedback value" color={C_GREEN} a="503" b="0" c="-503" />
        <ChanRow label="Position feedback 1 value" color="text-[#3398ff]" a="-157968" b="862644" c="1020612" />
        <ChanRow label="ActPos" color="text-[#ff10ff]" a="-3,6144332..." b="19,742889..." c="23,3573226..." />
        <div className="h-[16px] shrink-0 mx-[1px] mt-[1px] bg-[#f0f0f0] border-t border-[#d0d0d0] flex items-center">
          <span className="w-[23px] flex justify-center">
            <svg width="5" height="9" viewBox="0 0 5 9"><path d="M5 0v9L0 4.500z" fill="#555" /></svg>
          </span>
          <span className="w-[366px] h-[15px] border border-[#9a9a9a] rounded-[2px] bg-gradient-to-b from-[#f4f4f4] to-[#d4d4d4] flex items-center justify-center">
            <svg width="9" height="7" viewBox="0 0 9 7"><path d="M.5 0v7M3.500 0v7M6.500 0v7" stroke="#555" /></svg>
          </span>
          <span className="w-[22px] flex justify-center">
            <svg width="5" height="9" viewBox="0 0 5 9"><path d="M0 0v9l5-4.500z" fill="#555" /></svg>
          </span>
        </div>
      </div>
      <div className="h-[5px] shrink-0 bg-[#e8e8e8]" />

      <div className="flex-1 bg-white flex">
        <div className="w-[101px] pl-[7px] pt-[3px] flex items-center border-r-2 border-[#e9e9e9] bg-gradient-to-b from-white to-[#f2f2f2] mt-[1px]">Y-Axes</div>
        <div className="flex-1 bg-gradient-to-b from-white to-[#f2f2f2] mt-[1px]" />
        <div className="w-[17px] bg-[#f0f0f0] flex flex-col items-center justify-center gap-[7px] pt-[3px]">
          <svg width="9" height="5" viewBox="0 0 9 5"><path d="M4.500 0l4.500 5H0z" fill="#555" /></svg>
          <svg width="9" height="5" viewBox="0 0 9 5"><path d="M0 0h9L4.500 5z" fill="#555" /></svg>
        </div>
      </div>

      <svg width="90" height="50" viewBox="0 0 90 50" className="absolute left-[326px] top-[208px] pointer-events-none">
        <defs>
          <filter id="blur2" x="-20%" y="-30%" width="140%" height="160%">
            <feGaussianBlur stdDeviation="1.200" />
          </filter>
        </defs>
        <g filter="url(#blur2)" opacity=".5" fill="none" stroke="#555" strokeWidth="2">
          <ellipse cx="42" cy="15" rx="31" ry="9" />
          <ellipse cx="43" cy="34" rx="32" ry="9" />
        </g>
        <ellipse cx="40" cy="13" rx="31" ry="9" fill="none" stroke="#e8101a" strokeWidth="1.500" />
        <ellipse cx="41" cy="32" rx="32" ry="9.500" fill="none" stroke="#e8101a" strokeWidth="1.500" />
      </svg>
    </div>
  );
}

const stripRows = [
  "bg-transparent", "bg-transparent", "bg-[#7a3a70]", "bg-[#555]", "bg-[#3a4a5c]", "bg-transparent", "bg-transparent", "bg-transparent",
  "bg-[#3a8ac0]", "bg-transparent", "bg-[#555]", "bg-transparent", "bg-[#555]", "bg-[#7a3a70]", "bg-transparent", "bg-[#555]", "bg-transparent",
];

function LeftStrip() {
  return (
    <div className="w-[18px] shrink-0 h-full flex">
      <div className="w-[10px] bg-[#ededed] flex flex-col overflow-hidden pt-[29px]">
        {stripRows.map((c, i) => (
          <div key={i} className="h-[24px] shrink-0 border-b border-[#d4d4d4] flex items-center">
            <span className={`w-[3px] h-[8px] ${c}`} />
          </div>
        ))}
        <div className="h-[23px] bg-[#e2c978] shrink-0" />
      </div>
      <div className="w-[2px] bg-[#5c5c5c]" />
      <div className="w-[6px]" />
    </div>
  );
}

export default function App() {
  return (
    <div className={`relative w-[1115px] h-[744px] overflow-hidden flex bg-[#2e3f63] ${UI}`}>
      <LeftStrip />
      <div className="flex-1 flex flex-col min-w-0">
        <div className="flex h-[659px] shrink-0">
          <SolutionExplorer />
          <DocPanel />
        </div>
        <BottomPanel />
      </div>
      <CursorWindow />
    </div>
  );
}
